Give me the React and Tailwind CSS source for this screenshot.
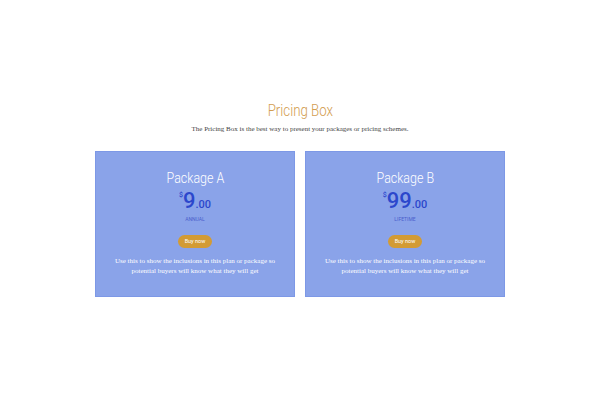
const plans = [
  { name: 'Package A', price: '9', term: 'ANNUAL' },
  { name: 'Package B', price: '99', term: 'LIFETIME' },
];

function PlanCard({ plan }) {
  return (
    <div className="w-[200px] h-[146px] bg-[#8aa3e9] border border-[#7d98e6] flex flex-col items-center pt-[17px]">
      <h3 className="text-[14px] leading-[18px] text-white font-light scale-x-[0.89] font-['Roboto',sans-serif]">
        {plan.name}
      </h3>
      <div className="flex items-start mt-[3px] text-[#2c47cc] font-['Roboto',sans-serif] font-medium">
        <span className="text-[7px] leading-[8px] mt-[1px]">$</span>
        <span className="text-[22px] leading-[22px]">{plan.price}</span>
        <span className="text-[11px] leading-[11px] mt-[9px]">.00</span>
      </div>
      <div className="text-[5px] leading-[6px] text-[#4a5fcc] mt-[4px] font-['Roboto',sans-serif]">{plan.term}</div>
      <button className="mt-[13px] h-[13px] w-[34px] rounded-full bg-[#d39b34] text-white text-[5.5px] leading-[13px] font-['Roboto',sans-serif]">
        Buy now
      </button>
      <p className="mt-[9px] text-[7px] leading-[9.5px] text-white text-center w-[180px] font-['Liberation_Serif',serif]">
        Use this to show the inclusions in this plan or package so potential buyers will know what they will get
      </p>
    </div>
  );
}

export default function App() {
  return (
    <div className="w-[600px] h-[400px] bg-white flex flex-col items-center pt-[101px]">
      <h1 className="text-[16px] leading-[20px] font-light text-[#d29d4f] scale-x-[0.83] font-['Roboto',sans-serif]">Pricing Box</h1>
      <p className="mt-[3px] text-[7px] leading-[10px] text-[#444] font-['Liberation_Serif',serif]">
        The Pricing Box is the best way to present your packages or pricing schemes.
      </p>
      <div className="flex gap-[10px] mt-[17px]">
        {plans.map((p) => (
          <PlanCard key={p.name} plan={p} />
        ))}
      </div>
    </div>
  );
}
